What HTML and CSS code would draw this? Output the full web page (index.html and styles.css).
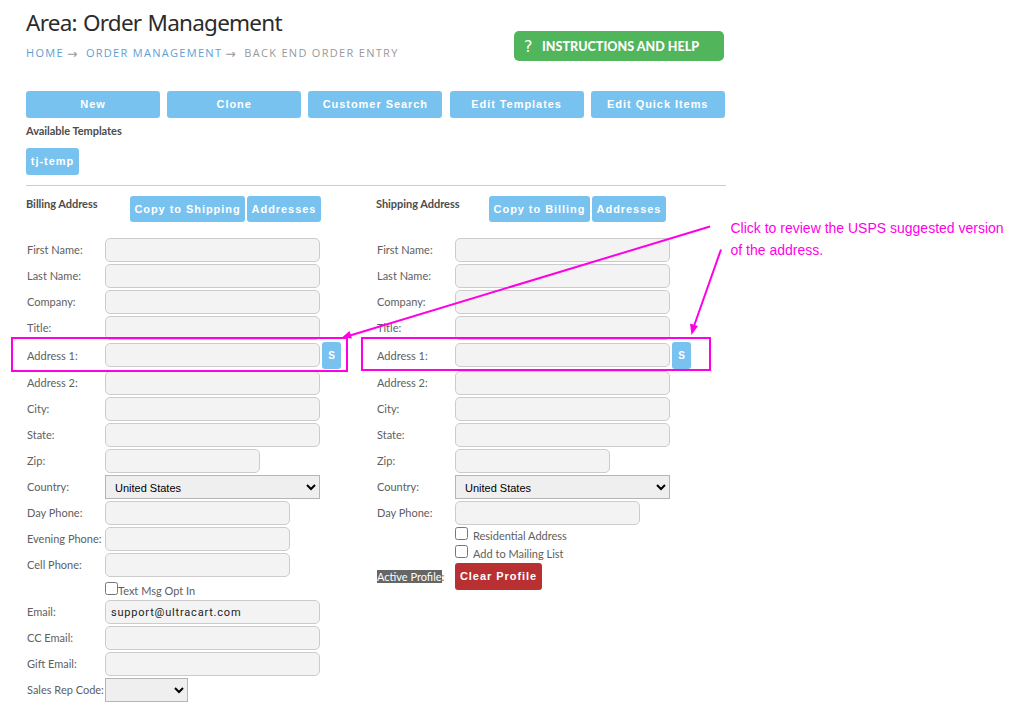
FILE: index.html
```html
<!DOCTYPE html>
<html lang="en">
<head>
    <meta charset="UTF-8">
    <meta name="viewport" content="width=device-width, initial-scale=1.0">
    <title>Back End Order Entry</title>
    <link rel="stylesheet" href="styles.css">
</head>
<body>
    <div class="container">
        <header class="header">
            <div>
                <h1><span>Area: Order Management</span></h1>
                <nav class="breadcrumb">
                    <a href="#" class="crumb-home">Home</a><span class="arrow">→</span><a href="#" class="crumb-order">Order Management</a><span class="arrow">→</span><span class="crumb-current">Back End Order Entry</span>
                </nav>
            </div>
            <a href="#" class="help"><span class="help-icon">?</span><span class="help-text">Instructions and Help</span></a>
        </header>

        <div class="toolbar">
            <button class="btn">New</button>
            <button class="btn">Clone</button>
            <button class="btn">Customer Search</button>
            <button class="btn">Edit Templates</button>
            <button class="btn">Edit Quick Items</button>
        </div>

        <div class="templates">
            <h2><span>Available Templates</span></h2>
            <button class="btn">tj-temp</button>
        </div>

        <form class="addresses">
            <section class="billing">
                <div class="section-head">
                    <h2><span>Billing Address</span></h2>
                    <button type="button" class="btn copy">Copy to Shipping</button>
                    <button type="button" class="btn book">Addresses</button>
                </div>
                <div class="row"><label>First Name:</label><input type="text"></div>
                <div class="row"><label>Last Name:</label><input type="text"></div>
                <div class="row"><label>Company:</label><input type="text"></div>
                <div class="row"><label>Title:</label><input type="text"></div>
                <div class="row tall"><label>Address 1:</label><input type="text"><button type="button" class="btn suggest">S</button></div>
                <div class="row"><label>Address 2:</label><input type="text"></div>
                <div class="row"><label>City:</label><input type="text"></div>
                <div class="row"><label>State:</label><input type="text"></div>
                <div class="row"><label>Zip:</label><input type="text" class="zip"></div>
                <div class="row"><label>Country:</label><select><option>United States</option></select></div>
                <div class="row"><label>Day Phone:</label><input type="text" class="phone"></div>
                <div class="row"><label>Evening Phone:</label><input type="text" class="phone"></div>
                <div class="row"><label>Cell Phone:</label><input type="text" class="phone"></div>
                <div class="row check opt-in"><input type="checkbox"><span>Text Msg Opt In</span></div>
                <div class="row"><label>Email:</label><input type="text" value="support@ultracart.com"></div>
                <div class="row"><label>CC Email:</label><input type="text"></div>
                <div class="row"><label>Gift Email:</label><input type="text"></div>
                <div class="row"><label>Sales Rep Code:</label><select class="rep"><option></option></select></div>
            </section>

            <section class="shipping">
                <div class="section-head">
                    <h2><span>Shipping Address</span></h2>
                    <button type="button" class="btn copy">Copy to Billing</button>
                    <button type="button" class="btn book">Addresses</button>
                </div>
                <div class="row"><label>First Name:</label><input type="text"></div>
                <div class="row"><label>Last Name:</label><input type="text"></div>
                <div class="row"><label>Company:</label><input type="text"></div>
                <div class="row"><label>Title:</label><input type="text"></div>
                <div class="row tall"><label>Address 1:</label><input type="text"><button type="button" class="btn suggest">S</button></div>
                <div class="row"><label>Address 2:</label><input type="text"></div>
                <div class="row"><label>City:</label><input type="text"></div>
                <div class="row"><label>State:</label><input type="text"></div>
                <div class="row"><label>Zip:</label><input type="text" class="zip"></div>
                <div class="row"><label>Country:</label><select><option>United States</option></select></div>
                <div class="row"><label>Day Phone:</label><input type="text" class="phone"></div>
                <div class="row check"><input type="checkbox"><span>Residential Address</span></div>
                <div class="row check"><input type="checkbox"><span>Add to Mailing List</span></div>
                <div class="row tall"><label><mark>Active Profile</mark>:</label><button type="button" class="btn clear">Clear Profile</button></div>
            </section>
        </form>
    </div>

    <!-- Callouts over the form -->
    <svg class="callout" width="1010" height="710" viewBox="0 0 1010 710">
        <g fill="none" stroke="#ff00e6" stroke-width="2">
            <rect x="12" y="338" width="335" height="33"/>
            <rect x="362" y="338" width="348" height="32"/>
            <path d="M710 226.500L350 335.500M721 249.500L694 326"/>
        </g>
        <path fill="#ff00e6" d="M342 337.500l7.500-6.500 2.500 7.500zM691.500 335l-1.500-11.500 8 2.500z"/>
    </svg>
    <p class="note"><span>Click to review the USPS suggested version</span><br><span>of the address.</span></p>
</body>
</html>
```
FILE: styles.css
```css
* {
    margin: 0;
    padding: 0;
    box-sizing: border-box;
}

body {
    position: relative;
    width: 1010px;
    height: 710px;
    overflow: hidden;
    background: #fff;
    color: #606060;
    font: 11px/16px Lato, sans-serif;
}

.container {
    width: 700px;
    margin-left: 26px;
}

/* Header */
.header {
    display: flex;
    justify-content: space-between;
    height: 91px;
    padding: 7px 2px 0 0;
}

h1 {
    color: #2b2b2b;
    font: 400 22.5px/32px "Noto Sans", sans-serif;
    letter-spacing: -0.75px;
    word-spacing: 1px;
}

.breadcrumb {
    display: flex;
    margin-top: 6px;
    color: #999;
    font: 11px/16px "Open Sans", sans-serif;
    letter-spacing: 1.3px;
    text-transform: uppercase;
    white-space: nowrap;
}

.breadcrumb a {
    color: #5e9fd2;
    text-decoration: none;
}

.arrow {
    width: 22px;
    padding-left: 3px;
    font: 12.5px/17px "DejaVu Sans", sans-serif;
}

.help {
    display: flex;
    align-items: center;
    width: 210px;
    height: 30px;
    margin-top: 24px;
    padding-left: 10px;
    border-radius: 5px;
    background: #51b55b;
    color: #fff;
    font-size: 12.5px;
    font-weight: 900;
    letter-spacing: 0.05px;
    text-decoration: none;
    text-transform: uppercase;
}

.help-text {
    padding-top: 1px;
}

.help-icon {
    width: 18px;
    font: 16px "DejaVu Sans", sans-serif;
}

/* Buttons */
.btn {
    height: 27px;
    padding: 0 0 2px;
    border: 0;
    border-radius: 3px;
    background: #77c2ef;
    color: #fff;
    font: bold 11px "Liberation Sans", sans-serif;
    letter-spacing: 0.95px;
    white-space: nowrap;
}

.toolbar {
    display: grid;
    grid-template-columns: repeat(5, 134px);
    justify-content: space-between;
    width: 698.8px;
}

h2 {
    color: #4c4c4c;
    font: bold 11px/16px Lato, sans-serif;
    letter-spacing: -0.03px;
}

.templates {
    height: 68px;
    padding-top: 5px;
    border-bottom: 1px solid #ccc;
}

.templates .btn {
    display: block;
    width: 53px;
    margin-top: 9px;
}

/* Address forms */
.addresses {
    display: grid;
    grid-template-columns: 350px 350px;
    align-items: start;
}

.section-head {
    display: flex;
    gap: 2px;
    height: 51px;
    padding-top: 10px;
}

.section-head h2 {
    width: 102px;
}

.shipping .section-head h2 {
    width: 111px;
}

.section-head .btn {
    height: 26px;
    padding-bottom: 0;
}

.copy {
    width: 115px;
}

.shipping .copy {
    width: 101px;
}

.book {
    width: 74px;
}

.row {
    display: flex;
    align-items: center;
    height: 26px;
}

.row.tall {
    height: 29px;
}

.row.tall input {
    margin-bottom: 1px;
}

.row label {
    flex: none;
    width: 79px;
    padding-left: 1px;
    white-space: nowrap;
}

input[type="text"] {
    width: 215px;
    height: 24px;
    padding: 0 5px;
    border: 1px solid #ccc;
    border-radius: 5px;
    background: #f3f3f3;
    color: #222;
    font: 11px Roboto, sans-serif;
    letter-spacing: 0.8px;
}

input.zip {
    width: 155px;
}

input.phone {
    width: 185px;
}

select {
    width: 215px;
    height: 24px;
    padding: 1px 0 0 5px;
    border: 1px solid #b5b5b5;
    border-radius: 0;
    background: #efefef;
    color: #000;
    font: 11px "Liberation Sans", sans-serif;
}

select.rep {
    width: 83px;
}

.suggest {
    width: 19px;
    margin-left: 2px;
    padding: 0;
    font-size: 10px;
    letter-spacing: 0;
}

.row.check {
    align-items: flex-start;
    height: 18px;
    padding: 1px 0 0 79px;
}

.check input {
    width: 13px;
    height: 13px;
}

.check span {
    margin: 1px 0 0 5px;
}

.row.opt-in {
    height: 21px;
    padding-top: 4px;
}

.opt-in span {
    margin-left: 0;
}

mark {
    background: #666;
    color: #fff;
}

.clear {
    width: 87px;
    background: #b93033;
}

/* Callouts */
.callout {
    position: absolute;
    top: 0;
    left: 0;
    pointer-events: none;
}

.note {
    position: absolute;
    top: 217px;
    left: 730.5px;
    color: #ff00e6;
    font: 14px/22px "Liberation Sans", sans-serif;
    white-space: nowrap;
}
```
